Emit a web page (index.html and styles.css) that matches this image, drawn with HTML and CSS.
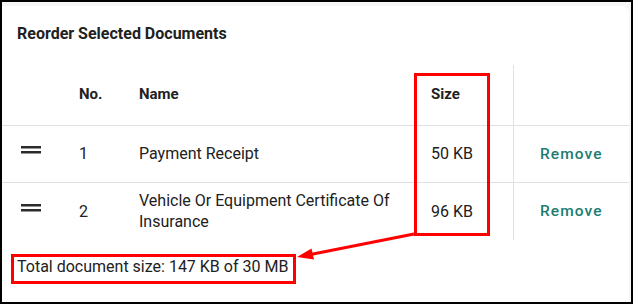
FILE: index.html
```html
<!DOCTYPE html>
<html>
	<head>
		<meta charset="UTF-8">
		<title>Reorder Selected Documents</title>
		<link rel="stylesheet" href="styles.css">
	</head>
	<body>
		<div class="frame">
			<div class="card">
				<h2 class="title">Reorder Selected Documents</h2>
				<table class="docs">
					<colgroup>
						<col class="c-handle">
						<col class="c-no">
						<col class="c-name">
						<col class="c-size">
						<col class="c-action">
					</colgroup>
					<thead>
						<tr class="head">
							<th></th>
							<th>No.</th>
							<th>Name</th>
							<th>Size</th>
							<th class="action"></th>
						</tr>
					</thead>
					<tbody>
						<tr class="row first">
							<td class="handle">
								<svg width="20" height="8" viewBox="0 0 20 8"><rect x="0" y="0" width="20" height="2.5" fill="#2b2b2b"/><rect x="0" y="5" width="20" height="2.5" fill="#2b2b2b"/></svg>
							</td>
							<td>1</td>
							<td>Payment Receipt</td>
							<td>50 KB</td>
							<td class="action"><a class="remove">Remove</a></td>
						</tr>
						<tr class="row">
							<td class="handle">
								<svg width="20" height="8" viewBox="0 0 20 8"><rect x="0" y="0" width="20" height="2.5" fill="#2b2b2b"/><rect x="0" y="5" width="20" height="2.5" fill="#2b2b2b"/></svg>
							</td>
							<td>2</td>
							<td>Vehicle Or Equipment Certificate Of Insurance</td>
							<td>96 KB</td>
							<td class="action"><a class="remove">Remove</a></td>
						</tr>
					</tbody>
				</table>
				<p class="total">Total document size: 147 KB of 30 MB</p>
			</div>

			<!-- red call-out drawn over the screenshot -->
			<svg class="callout" width="633" height="304" viewBox="0 0 633 304">
				<rect x="415.5" y="74.5" width="73" height="160" fill="none" stroke="#f00" stroke-width="3"/>
				<rect x="12.5" y="255.5" width="282" height="27" fill="none" stroke="#f00" stroke-width="3"/>
				<line x1="414" y1="234" x2="308" y2="255" stroke="#f00" stroke-width="3"/>
				<polygon points="297,257 314,259.5 311.5,248.5" fill="#f00"/>
			</svg>
		</div>
	</body>
</html>
```

FILE: styles.css
```css
*{
	margin: 0;
	padding: 0;
	box-sizing: border-box;
}
body{
	font-family: Roboto, "Liberation Sans", sans-serif;
	color: #212121;
	background: #fff;
}
.frame{
	position: relative;
	width: 633px;
	height: 304px;
	border: 2px solid #000;
	background: #f7f7f7;
	padding: 4px 2px 0 0;
}
.card{
	height: 100%;
	background: #fff;
	border-radius: 0 8px 0 0;
}
.title{
	font-size: 16px;
	font-weight: 700;
	line-height: 20px;
	padding: 18px 0 0 15px;
}
.docs{
	width: 100%;
	margin-top: 21px;
	border-collapse: collapse;
	table-layout: fixed;
	font-size: 16px;
}
.c-handle{ width: 61px; }
.c-no{ width: 60px; }
.c-name{ width: 292px; }
.c-size{ width: 98px; }
.docs th,
.docs td{
	text-align: left;
	vertical-align: middle;
	padding: 0 16px;
	line-height: 21px;
}
.docs th{
	font-weight: 700;
	font-size: 15px;
}
.head{
	height: 60px;
	border-bottom: 1px solid #e0e0e0;
}
.row{
	height: 58px;
}
.row.first{
	height: 57px;
	border-bottom: 1px solid #e0e0e0;
}
.docs .handle{
	padding-left: 19px;
}
.handle svg{
	display: block;
	margin-bottom: 7px;
}
.docs .action{
	border-left: 1px solid #e0e0e0;
	text-align: center;
	padding: 0;
}
.remove{
	color: #1b7d72;
	font-weight: 500;
	font-size: 15.5px;
	letter-spacing: 1.1px;
	cursor: pointer;
}
.total{
	font-size: 16px;
	line-height: 20px;
	margin: 17px 0 0 15px;
}
.callout{
	position: absolute;
	left: -2px;
	top: -2px;
	pointer-events: none;
}
```
